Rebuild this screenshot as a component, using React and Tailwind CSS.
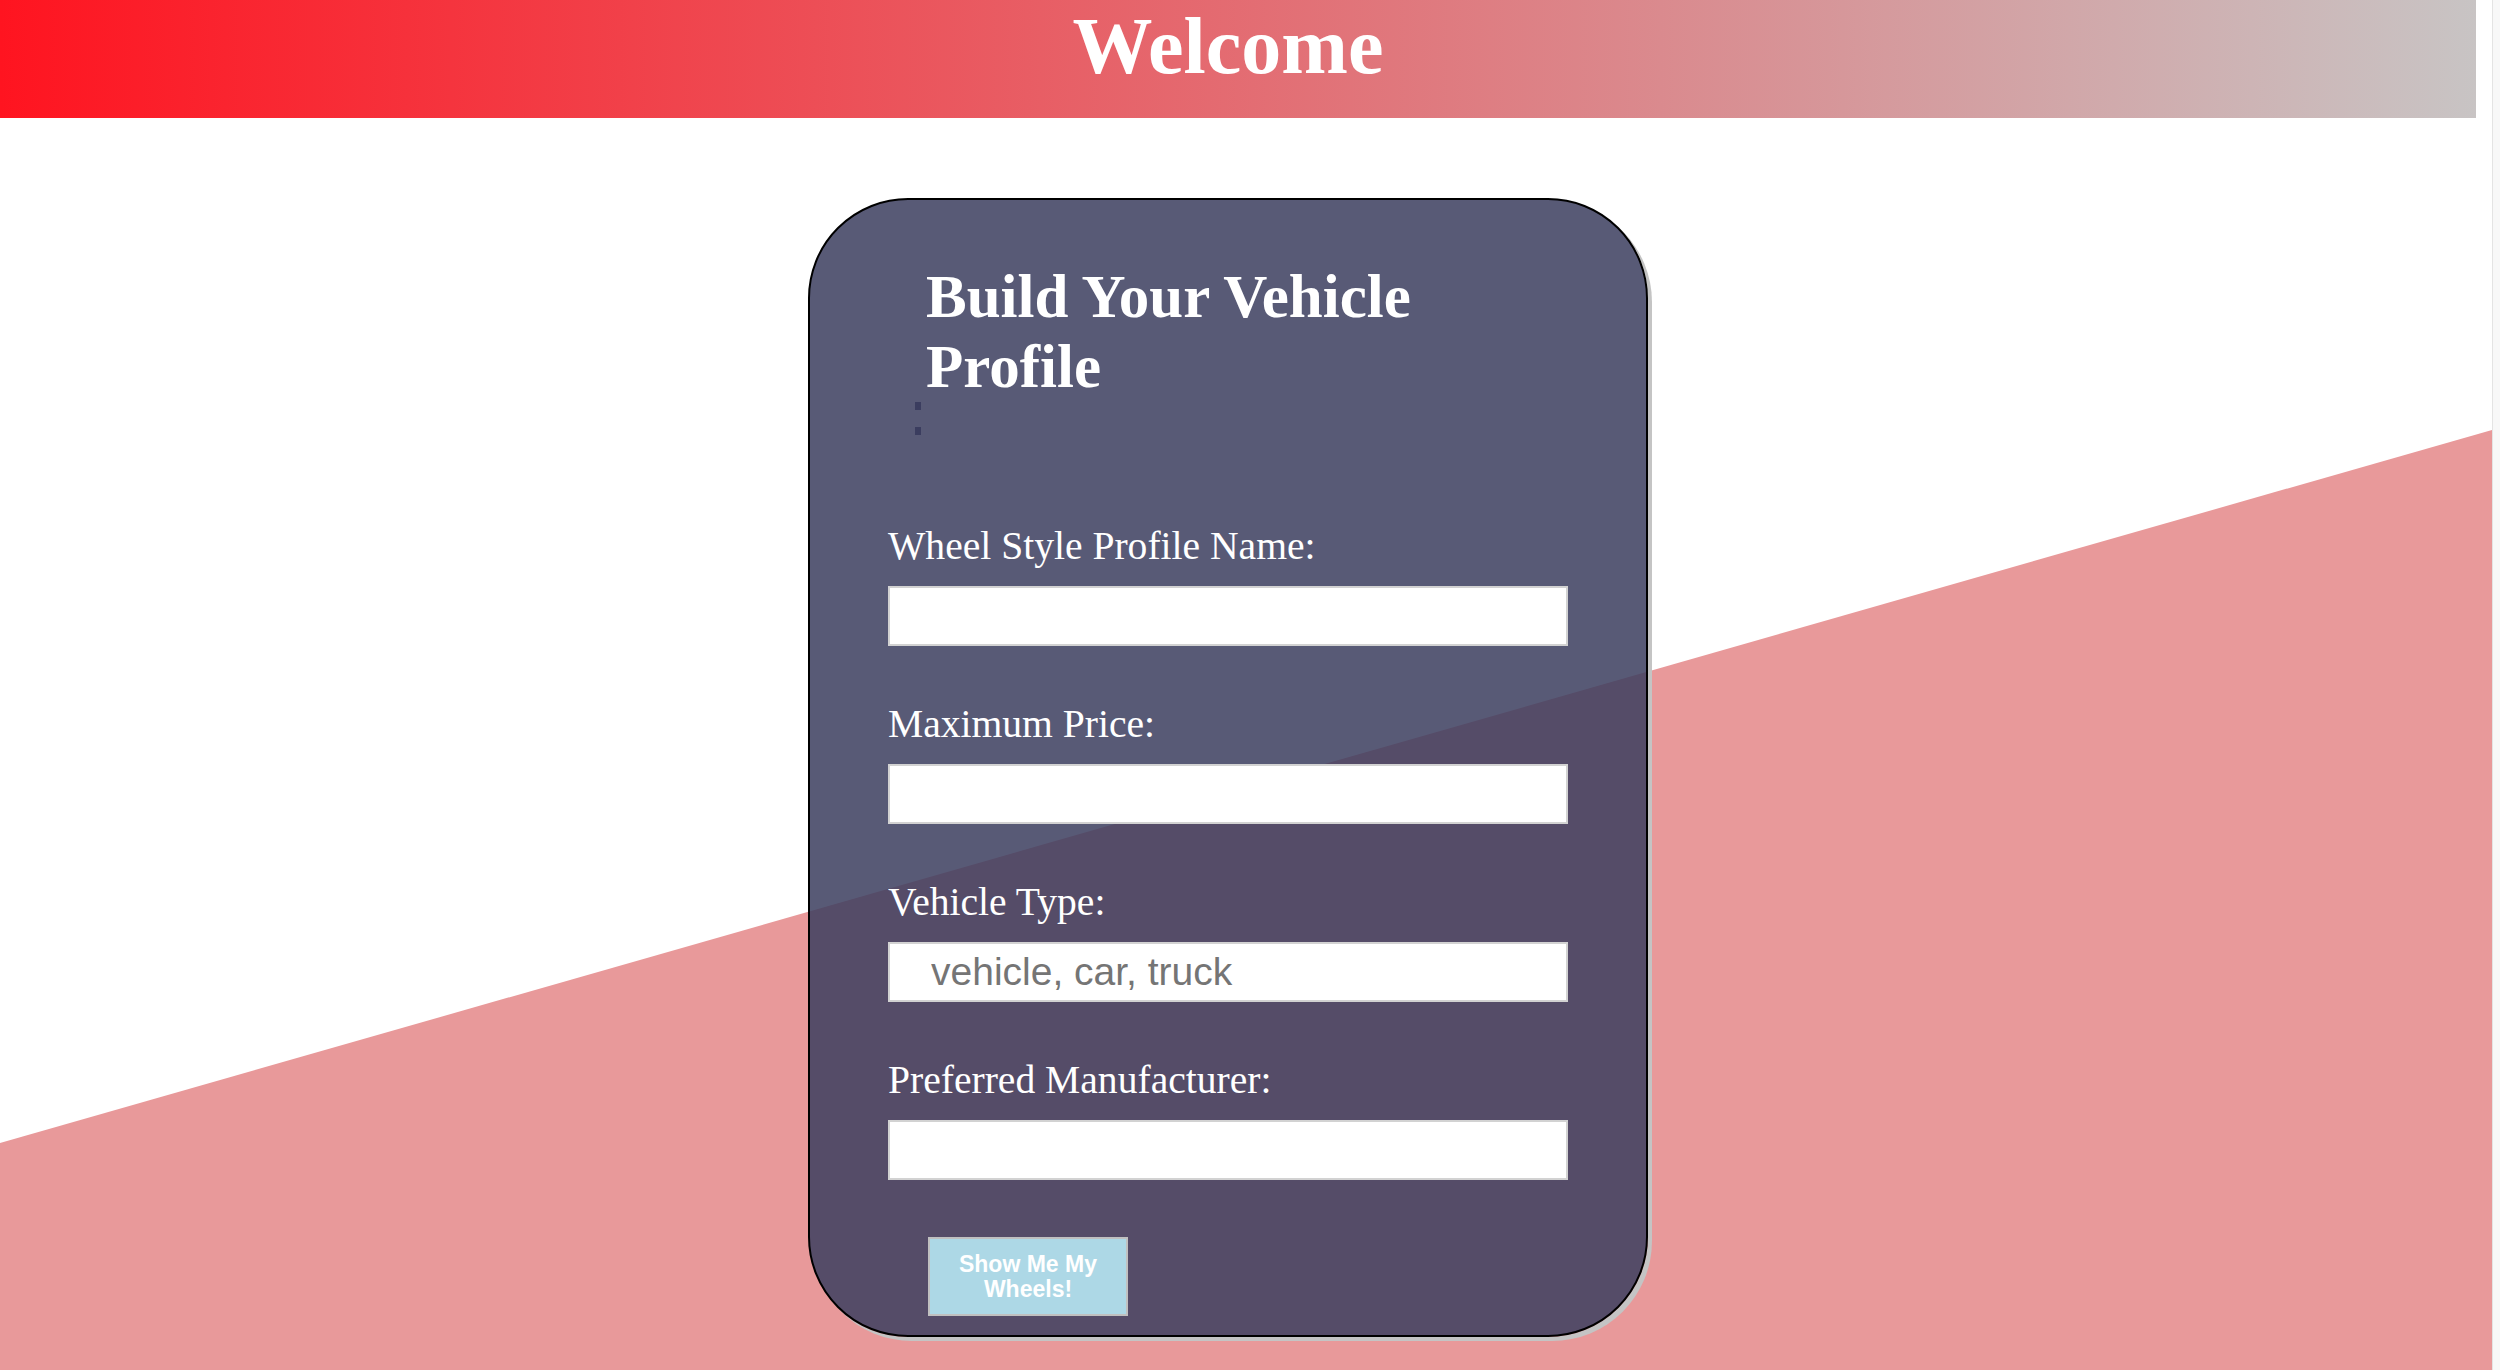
import React from 'react';

const fields = [
  { label: 'Wheel Style Profile Name:', placeholder: '' },
  { label: 'Maximum Price:', placeholder: '' },
  { label: 'Vehicle Type:', placeholder: 'vehicle, car, truck' },
  { label: 'Preferred Manufacturer:', placeholder: '' },
];

const App = () => {
  return (
    <div className="flex h-[1370px] w-full overflow-hidden bg-white font-['Liberation_Serif',serif]">
      <div className="relative h-full w-[2492px] shrink-0">
        {/* pink diagonal backdrop */}
        <div className="absolute inset-0 bg-[#e8999a] [clip-path:polygon(0_1143px,100%_430px,100%_100%,0_100%)]" />

        <header className="relative h-[118px] w-[2476px] bg-[linear-gradient(to_right,#ff1420,#c8c4c4)]">
          <h1 className="w-[2456px] pt-[2px] text-center text-[80px] font-bold leading-[88px] text-white">
            Welcome
          </h1>
        </header>

        <div className="relative flex w-[2456px] justify-center pt-[80px]">
          <div className="h-[1139px] w-[840px] rounded-[100px] border-2 border-black bg-[rgba(60,63,96,0.86)] px-[78px] pt-[62px] shadow-[4px_4px_0_#c4c4c4]">
            <h2 className="ml-[38px] max-w-[560px] text-[61px] font-bold leading-[70px] text-white">
              Build Your Vehicle Profile
            </h2>
            <div className="ml-[27px] flex flex-col gap-[17px]">
              <span className="h-[8px] w-[6px] bg-[#3b3d5f]" />
              <span className="h-[8px] w-[6px] bg-[#3b3d5f]" />
            </div>

            <form className="mt-[89px] flex flex-col">
              {fields.map((f) => (
                <div key={f.label} className="mb-[56px] flex flex-col">
                  <label className="text-[39.6px] leading-[45px] text-white">{f.label}</label>
                  <input
                    type="text"
                    placeholder={f.placeholder}
                    className="mt-[17px] h-[60px] w-full border-2 border-[#d2d2d2] bg-white pl-[41px] font-['Liberation_Sans',sans-serif] text-[39px] text-[#333] outline-none placeholder:text-[#757575]"
                  />
                </div>
              ))}
              <button
                type="button"
                className="mt-[1px] ml-[40px] h-[79px] w-[200px] border-2 border-[#c0c0c0] bg-[#add8e6] px-[20px] font-['Liberation_Sans',sans-serif] text-[23px] font-bold leading-[25px] text-white"
              >
                Show Me My Wheels!
              </button>
            </form>
          </div>
        </div>
      </div>
      <div className="h-full flex-1 border-l border-[#e4e4e4] bg-[#f8f8f8]" />
    </div>
  );
};

export default App;
